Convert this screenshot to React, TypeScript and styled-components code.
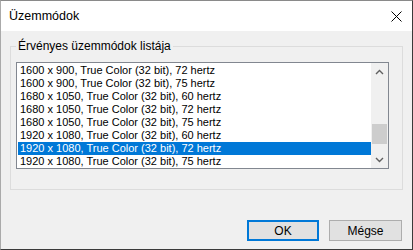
import styled, { createGlobalStyle } from 'styled-components'

const modes = [
  '1600 x 900, True Color (32 bit), 72 hertz',
  '1600 x 900, True Color (32 bit), 75 hertz',
  '1680 x 1050, True Color (32 bit), 60 hertz',
  '1680 x 1050, True Color (32 bit), 72 hertz',
  '1680 x 1050, True Color (32 bit), 75 hertz',
  '1920 x 1080, True Color (32 bit), 60 hertz',
  '1920 x 1080, True Color (32 bit), 72 hertz',
  '1920 x 1080, True Color (32 bit), 75 hertz',
]
const selectedIndex = 6

const Global = createGlobalStyle`
  html, body { margin: 0; padding: 0; background: #f0f0f0; }
  body { font-family: "Liberation Sans", Arial, sans-serif; }
`

const Window = styled.div`
  width: 413px;
  height: 250px;
  box-sizing: border-box;
  border-top: 1px solid #8a8a8a;
  border-left: 1px solid #aaaaaa;
  border-right: 1px solid #3a3a3a;
  border-bottom: 1px solid #3a3a3a;
  background: #f0f0f0;
  display: flex;
  flex-direction: column;
`

const TitleBar = styled.div`
  height: 30px;
  background: #ffffff;
  display: flex;
  align-items: center;
  justify-content: space-between;
  padding: 0 10px 0 8px;
`

const Title = styled.span`
  font-size: 12.5px;
  color: #000;
`

const Body = styled.div`
  flex: 1;
  display: flex;
  flex-direction: column;
  padding: 8px 9px 7px 9px;
`

const GroupBox = styled.fieldset`
  margin: 0;
  padding: 9px 13px 17px 5px;
  border: 1px solid #dcdcdc;
  height: 151px;
  box-sizing: border-box;
`

const Legend = styled.legend`
  font-size: 12px;
  padding: 0 2px 0 2px;
  margin-left: 0;
  color: #000;
  line-height: 14px;
`

const ListBox = styled.div`
  border: 1px solid #828790;
  background: #fff;
  height: 107px;
  display: flex;
  box-sizing: border-box;
  padding: 1px 0 0 1px;
`

const Rows = styled.div`
  flex: 1;
  display: flex;
  flex-direction: column;
`

const Row = styled.div<{ $selected?: boolean }>`
  height: 13px;
  line-height: 13px;
  font-size: 11px;
  padding-left: 2px;
  white-space: nowrap;
  color: ${p => (p.$selected ? '#ffffff' : '#000000')};
  background: ${p => (p.$selected ? '#0078d7' : 'transparent')};
`

const ScrollBar = styled.div`
  width: 17px;
  background: #f0f0f0;
  display: flex;
  flex-direction: column;
  margin-top: -1px;
`

const ArrowButton = styled.div`
  height: 17px;
  display: flex;
  align-items: center;
  justify-content: center;
`

const Track = styled.div`
  flex: 1;
  display: flex;
  flex-direction: column;
  padding: 0 1px;
`

const Thumb = styled.div`
  height: 20px;
  background: #cdcdcd;
  margin-top: 44px;
`

const Footer = styled.div`
  display: flex;
  justify-content: flex-end;
  gap: 10px;
  margin-top: 30px;
  padding-right: 1px;
`

const Button = styled.button<{ $default?: boolean }>`
  width: ${p => (p.$default ? '72px' : '73px')};
  height: 21px;
  box-sizing: border-box;
  font-family: "Liberation Sans", Arial, sans-serif;
  font-size: 12px;
  color: #000;
  background: #e1e1e1;
  border: ${p => (p.$default ? '2px solid #0078d7' : '1px solid #adadad')};
  padding: 0;
`

const Chevron = ({ up }: { up?: boolean }) => (
  <svg width="9" height="6" viewBox="0 0 9 6">
    <path
      d={up ? 'M1 5 L4.5 1.5 L8 5' : 'M1 1 L4.5 4.5 L8 1'}
      fill="none"
      stroke="#606060"
      strokeWidth="1.4"
    />
  </svg>
)

export default function App() {
  return (
    <>
      <Global />
      <Window>
        <TitleBar>
          <Title>Üzemmódok</Title>
          <svg width="11" height="11" viewBox="0 0 11 11">
            <path d="M0.5 0.5 L10.5 10.5 M10.5 0.5 L0.5 10.5" stroke="#000" strokeWidth="1" />
          </svg>
        </TitleBar>
        <Body>
          <GroupBox>
            <Legend>Érvényes üzemmódok listája</Legend>
            <ListBox>
              <Rows>
                {modes.map((m, i) => (
                  <Row key={m} $selected={i === selectedIndex}>{m}</Row>
                ))}
              </Rows>
              <ScrollBar>
                <ArrowButton><Chevron up /></ArrowButton>
                <Track><Thumb /></Track>
                <ArrowButton><Chevron /></ArrowButton>
              </ScrollBar>
            </ListBox>
          </GroupBox>
          <Footer>
            <Button $default>OK</Button>
            <Button>Mégse</Button>
          </Footer>
        </Body>
      </Window>
    </>
  )
}
